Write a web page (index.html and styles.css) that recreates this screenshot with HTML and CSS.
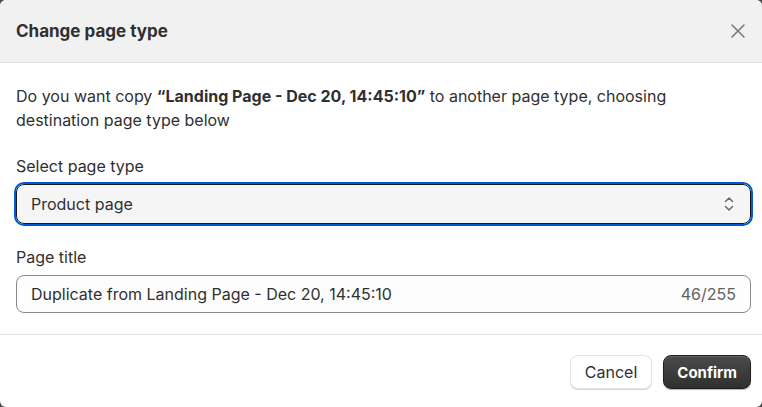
FILE: index.html
```html
<!DOCTYPE html>
<html lang="en">
<head>
    <meta charset="UTF-8">
    <title>Change page type</title>
    <link rel="stylesheet" href="styles.css">
</head>
<body>
    <div class="modal">
        <div class="modal-header">
            <h2>Change page type</h2>
            <button class="close-btn" aria-label="Close">
                <svg width="16" height="16" viewBox="0 0 16 16"><path d="M2 2L14 14M14 2L2 14" stroke="#7a7a7a" stroke-width="1.6" stroke-linecap="round"/></svg>
            </button>
        </div>
        <div class="modal-body">
            <p class="intro">Do you want copy <b>“Landing Page - Dec 20, 14:45:10”</b> to another page type, choosing destination page type below</p>

            <label class="field-label" for="pageType">Select page type</label>
            <div class="select-wrap">
                <select id="pageType">
                    <option>Product page</option>
                    <option>Landing page</option>
                    <option>Collection page</option>
                </select>
                <svg class="select-arrows" width="12" height="18" viewBox="0 0 12 18"><path d="M2.5 6.5L6 3L9.5 6.5M2.5 11.5L6 15L9.5 11.5" fill="none" stroke="#6b6b6b" stroke-width="1.5" stroke-linecap="round" stroke-linejoin="round"/></svg>
            </div>

            <label class="field-label" for="pageTitle">Page title</label>
            <div class="text-field">
                <input type="text" id="pageTitle" value="Duplicate from Landing Page - Dec 20, 14:45:10">
                <span class="counter">46/255</span>
            </div>
        </div>
        <div class="modal-footer">
            <button class="btn btn-secondary">Cancel</button>
            <button class="btn btn-primary">Confirm</button>
        </div>
    </div>
</body>
</html>
```

FILE: styles.css
```css
body {
    margin: 0;
    background-color: #4a4a4a;
    font-family: Inter, "Noto Sans", sans-serif;
    color: #303030;
}
.modal {
    height: 407px;
    background-color: white;
    border-radius: 6px;
    overflow: hidden;
}
.modal-header {
    display: flex;
    align-items: center;
    justify-content: space-between;
    height: 62px;
    padding: 0 16px;
    background-color: #f1f1f1;
    border-bottom: 1px solid #e1e1e1;
}
.modal-header h2 {
    margin: 0;
    font-size: 17px;
    font-weight: 700;
    color: #303030;
}
.close-btn {
    border: none;
    background: none;
    padding: 0;
    width: 16px;
    height: 16px;
    cursor: pointer;
}
.modal-body {
    padding: 21px 11px 21px 16px;
    border-bottom: 1px solid #e3e3e3;
}
.intro {
    margin: 0 0 24px;
    font-size: 16px;
    line-height: 24px;
}
.intro b {
    font-weight: 700;
}
.field-label {
    display: block;
    font-size: 16px;
    line-height: 20px;
    margin-bottom: 8px;
}
.select-wrap {
    position: relative;
    margin-bottom: 23px;
}
select {
    display: block;
    width: 100%;
    height: 40px;
    padding: 0 14px;
    font-family: inherit;
    font-size: 16px;
    color: #303030;
    background-color: #f5f5f5;
    border: 1px solid #1a1a1a;
    border-radius: 8px;
    outline: 2px solid #005bd3;
    outline-offset: 0;
    appearance: none;
}
.select-arrows {
    position: absolute;
    right: 16px;
    top: 11px;
    pointer-events: none;
}
.text-field {
    display: flex;
    align-items: center;
    height: 38px;
    padding: 0 14px;
    background-color: #fdfdfd;
    border: 1px solid #8a8a8a;
    border-radius: 8px;
    box-sizing: border-box;
}
.text-field input {
    flex: 1;
    border: none;
    background: none;
    padding: 0;
    font-family: inherit;
    font-size: 16px;
    color: #303030;
    outline: none;
}
.counter {
    font-size: 16px;
    color: #616161;
}
.modal-footer {
    display: flex;
    justify-content: flex-end;
    gap: 11px;
    padding: 20px 11px 0 16px;
}
.btn {
    height: 34px;
    padding: 0 13px;
    font-family: inherit;
    font-size: 15px;
    border-radius: 8px;
    cursor: pointer;
}
.btn-secondary {
    padding: 0 14px;
    font-size: 16px;
    background-color: white;
    color: #303030;
    border: 1px solid #e3e3e3;
    box-shadow: 0 1px 0 #d4d4d4;
}
.btn-primary {
    background: linear-gradient(#4a4a4a, #303030);
    color: white;
    font-weight: 700;
    border: 1px solid #1f1f1f;
    box-shadow: 0 1px 1px rgba(0, 0, 0, 0.3), inset 0 1px 0 rgba(255, 255, 255, 0.15);
}
```
